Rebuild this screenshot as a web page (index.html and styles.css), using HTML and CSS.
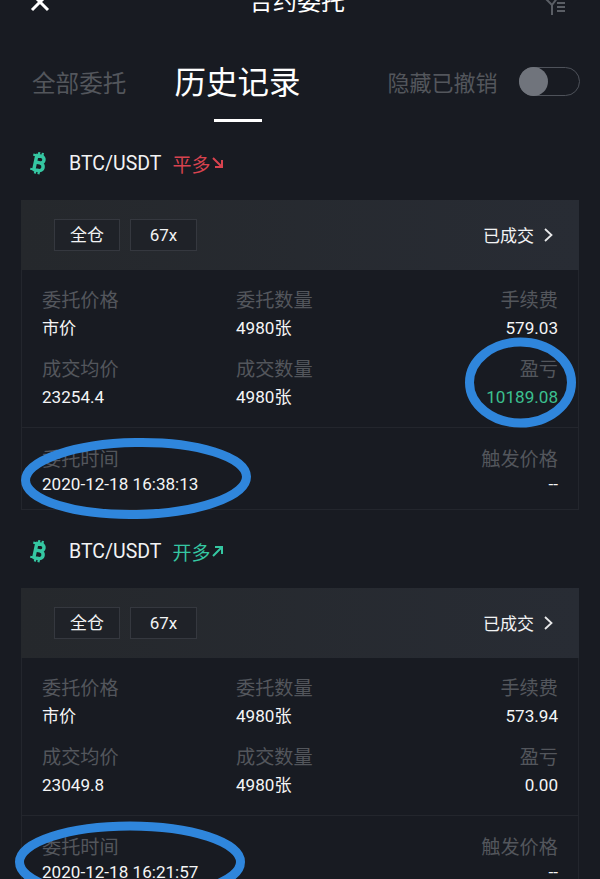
FILE: index.html
```html
<!DOCTYPE html>
<html lang="zh">
<head>
<meta charset="utf-8">
<title>合约委托</title>
<link rel="stylesheet" href="styles.css">
</head>
<body>
<main class="page">
  <header class="topbar">
    <svg class="close" viewBox="0 0 20 16" width="20" height="16"><path d="M2 -3 L10 5 L18 -3 M2 13 L10 5 L18 13" fill="none" stroke="#fff" stroke-width="3"/></svg>
    <h1 class="title">合约委托</h1>
    <svg class="filter" viewBox="0 0 22 18" width="22" height="18"><path d="M1 0 L8 7 V17 M14 -1 L8 7" fill="none" stroke="#5a5e65" stroke-width="2"/><path d="M13 5 H21 M13 9 H21 M13 13 H21" stroke="#5a5e65" stroke-width="2"/></svg>
  </header>

  <nav class="tabs">
    <span class="tab">全部委托</span>
    <span class="tab tab-active">历史记录</span>
    <span class="hide-label">隐藏已撤销</span>
    <span class="toggle"><span class="knob"></span></span>
  </nav>

  <section class="order">
    <div class="pair">
      <svg class="coin" viewBox="0 0 22 26" width="20" height="24"><g transform="rotate(12 11 13)" fill="none" stroke="#35c7a2" stroke-width="3.8"><path d="M7 5 H13 C18 5 18 12.5 13 12.5 H7 M13 12.5 C19 12.5 19 21 13 21 H7 M8 4 V22"/><path d="M4 5 H8 M4 21 H8 M10 1 V5 M14 1 V5 M10 21 V25 M14 21 V25" stroke-width="2.4"/></g></svg>
      <span class="symbol">BTC/USDT</span>
      <span class="side side-close">平多</span>
      <svg class="arrow" viewBox="0 0 12 12" width="12" height="12"><path d="M1 1 L10 10 M10 3 V10 H3" fill="none" stroke="#d8434f" stroke-width="2"/></svg>
    </div>
    <div class="card">
      <div class="card-head">
        <span class="tag">全仓</span>
        <span class="tag tag-lev">67x</span>
        <span class="status">已成交</span>
        <svg class="chevron" viewBox="0 0 9 14" width="9" height="14"><path d="M1 1 L7.5 7 L1 13" fill="none" stroke="#e8e9ea" stroke-width="1.8"/></svg>
      </div>
      <div class="grid">
        <div class="cell"><div class="label">委托价格</div><div class="value">市价</div></div>
        <div class="cell"><div class="label">委托数量</div><div class="value">4980张</div></div>
        <div class="cell right"><div class="label">手续费</div><div class="value">579.03</div></div>
        <div class="cell"><div class="label">成交均价</div><div class="value">23254.4</div></div>
        <div class="cell"><div class="label">成交数量</div><div class="value">4980张</div></div>
        <div class="cell right"><div class="label">盈亏</div><div class="value profit">10189.08</div></div>
      </div>
      <div class="foot">
        <div class="cell"><div class="label">委托时间</div><div class="value">2020-12-18 16:38:13</div></div>
        <div class="cell right"><div class="label">触发价格</div><div class="value">--</div></div>
      </div>
    </div>
  </section>

  <section class="order">
    <div class="pair">
      <svg class="coin" viewBox="0 0 22 26" width="20" height="24"><g transform="rotate(12 11 13)" fill="none" stroke="#35c7a2" stroke-width="3.8"><path d="M7 5 H13 C18 5 18 12.5 13 12.5 H7 M13 12.5 C19 12.5 19 21 13 21 H7 M8 4 V22"/><path d="M4 5 H8 M4 21 H8 M10 1 V5 M14 1 V5 M10 21 V25 M14 21 V25" stroke-width="2.4"/></g></svg>
      <span class="symbol">BTC/USDT</span>
      <span class="side side-open">开多</span>
      <svg class="arrow" viewBox="0 0 12 12" width="12" height="12"><path d="M1 11 L10 2 M3 2 H10 V9" fill="none" stroke="#35c7a2" stroke-width="2"/></svg>
    </div>
    <div class="card">
      <div class="card-head">
        <span class="tag">全仓</span>
        <span class="tag tag-lev">67x</span>
        <span class="status">已成交</span>
        <svg class="chevron" viewBox="0 0 9 14" width="9" height="14"><path d="M1 1 L7.5 7 L1 13" fill="none" stroke="#e8e9ea" stroke-width="1.8"/></svg>
      </div>
      <div class="grid">
        <div class="cell"><div class="label">委托价格</div><div class="value">市价</div></div>
        <div class="cell"><div class="label">委托数量</div><div class="value">4980张</div></div>
        <div class="cell right"><div class="label">手续费</div><div class="value">573.94</div></div>
        <div class="cell"><div class="label">成交均价</div><div class="value">23049.8</div></div>
        <div class="cell"><div class="label">成交数量</div><div class="value">4980张</div></div>
        <div class="cell right"><div class="label">盈亏</div><div class="value">0.00</div></div>
      </div>
      <div class="foot">
        <div class="cell"><div class="label">委托时间</div><div class="value">2020-12-18 16:21:57</div></div>
        <div class="cell right"><div class="label">触发价格</div><div class="value">--</div></div>
      </div>
    </div>
  </section>

  <svg class="marks" viewBox="0 0 600 879" width="600" height="879">
    <g fill="none" stroke="#2f86dc" stroke-width="9">
      <ellipse cx="520.5" cy="382.5" rx="51" ry="40.5"/>
      <ellipse cx="136" cy="478.5" rx="110.5" ry="36" transform="rotate(-1 136 478)"/>
      <ellipse cx="130" cy="862" rx="110.5" ry="36"/>
    </g>
  </svg>
</main>
</body>
</html>
```

FILE: styles.css
```css
* { box-sizing: border-box; }
html, body { margin: 0; padding: 0; background: #181b22; }
body {
  width: 600px;
  height: 879px;
  overflow: hidden;
  font-family: Roboto, "Noto Sans CJK SC", sans-serif;
  color: #fff;
}
.page { position: relative; width: 600px; height: 879px; overflow: hidden; }

.topbar {
  height: 16px;
  padding: 0 34px 0 30px;
  display: flex;
  align-items: flex-end;
  justify-content: space-between;
  overflow: hidden;
}
.close { display: block; margin-bottom: 3px; }
.title {
  margin: 0 0 -3px;
  font-size: 24px;
  line-height: 34px;
  font-weight: 400;
  flex: none;
}
.filter { display: block; }

.tabs {
  height: 108px;
  padding: 44px 0 0 32px;
  display: flex;
  align-items: flex-start;
  white-space: nowrap;
}
.tab { flex: none; font-size: 23.6px; line-height: 48px; color: #53565c; }
.tab-active {
  position: relative;
  margin-left: 48px;
  font-size: 31.5px;
  color: #fff;
}
.tab-active::after {
  content: "";
  position: absolute;
  left: 40px;
  bottom: -14px;
  width: 48px;
  height: 3px;
  background: #fff;
}
.hide-label { flex: none; margin-left: 87px; font-size: 22px; line-height: 48px; color: #53565c; }
.toggle {
  display: block;
  flex: none;
  margin: 7px 0 0 22px;
  width: 61px;
  height: 29px;
  border: 1px solid #4e525a;
  border-radius: 15px;
  position: relative;
}
.knob {
  position: absolute;
  left: -1px;
  top: -1px;
  width: 29px;
  height: 29px;
  border-radius: 50%;
  background: #70747c;
}

.pair {
  height: 76px;
  padding: 2px 0 0 28px;
  display: flex;
  align-items: center;
}
.order + .order .pair { height: 78px; padding-top: 4px; }
.coin { margin-right: 21px; flex: none; }
.symbol { font-size: 19.5px; color: #f2f3f4; }
.side { margin-left: 11px; font-size: 19px; }
.side-close { color: #d8434f; }
.side-open { color: #35c7a2; }
.arrow { margin-left: 2px; }

.card {
  margin: 0 21px;
  width: 558px;
  height: 310px;
  border: 1px solid #23262d;
  border-top: 0;
}
.card-head {
  height: 70px;
  margin: 0 -1px;
  padding: 0 26px 0 33px;
  display: flex;
  align-items: center;
  background: linear-gradient(90deg, #25282c, #282c34);
}
.tag {
  width: 66px;
  height: 32px;
  border: 1px solid #35383f;
  background: #1f2228;
  font-size: 17px;
  line-height: 30px;
  text-align: center;
  color: #f2f3f4;
}
.tag-lev { margin-left: 10px; width: 67px; }
.status { margin: 0 0 2px auto; font-size: 17px; color: #f2f3f4; }
.chevron { margin-left: 10px; }

.grid {
  padding: 17px 20px 0;
  height: 158px;
  border-bottom: 1px solid #23262d;
  display: grid;
  grid-template-columns: 194px 1fr auto;
  grid-auto-rows: 69px;
}
.foot {
  padding: 18px 20px 0;
  display: flex;
  justify-content: space-between;
}
.cell.right { text-align: right; }
.label { font-size: 19.2px; line-height: 28px; color: #53565c; }
.value { margin-top: -1px; font-size: 17.1px; line-height: 28px; color: #f4f5f6; }
.foot .value { margin-top: -4px; }
.profit { color: #3cc090; }

.marks { position: absolute; left: 0; top: 0; pointer-events: none; }
```
